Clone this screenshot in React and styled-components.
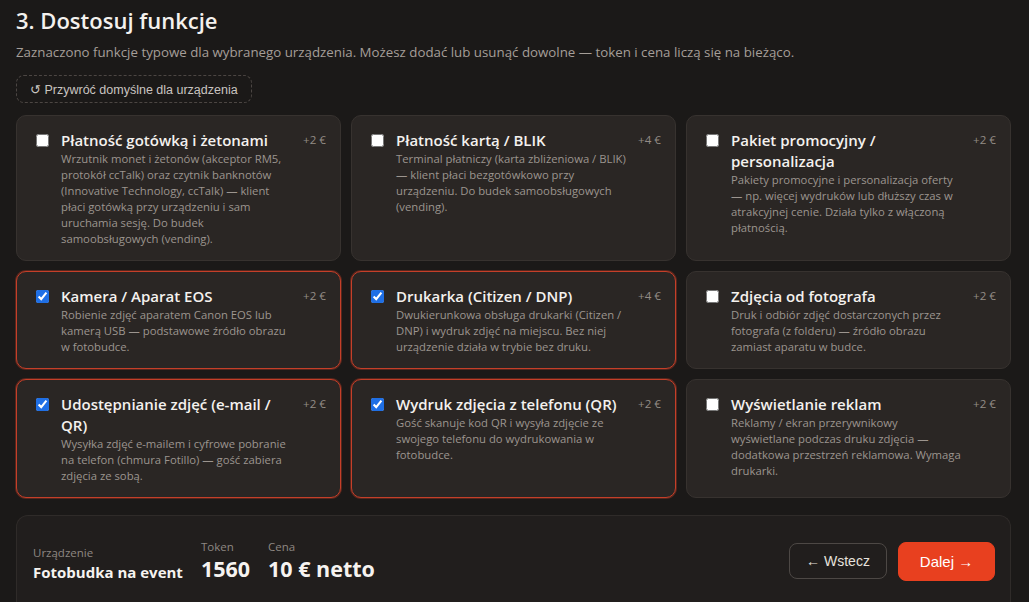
import styled, { createGlobalStyle } from "styled-components";

const GlobalStyle = createGlobalStyle`
  * { box-sizing: border-box; }
  body {
    margin: 0;
    background: #1b1918;
    color: #f1eeeb;
    font-family: "Open Sans", "Noto Sans", sans-serif;
  }
`;

const FEATURES = [
  {
    id: "cash",
    title: "Płatność gotówką i żetonami",
    desc: "Wrzutnik monet i żetonów (akceptor RM5, protokół ccTalk) oraz czytnik banknotów (Innovative Technology, ccTalk) — klient płaci gotówką przy urządzeniu i sam uruchamia sesję. Do budek samoobsługowych (vending).",
    price: 2,
    checked: false,
  },
  {
    id: "card",
    title: "Płatność kartą / BLIK",
    desc: "Terminal płatniczy (karta zbliżeniowa / BLIK) — klient płaci bezgotówkowo przy urządzeniu. Do budek samoobsługowych (vending).",
    price: 4,
    checked: false,
  },
  {
    id: "promo",
    title: "Pakiet promocyjny / personalizacja",
    desc: "Pakiety promocyjne i personalizacja oferty — np. więcej wydruków lub dłuższy czas w atrakcyjnej cenie. Działa tylko z włączoną płatnością.",
    price: 2,
    checked: false,
  },
  {
    id: "camera",
    title: "Kamera / Aparat EOS",
    desc: "Robienie zdjęć aparatem Canon EOS lub kamerą USB — podstawowe źródło obrazu w fotobudce.",
    price: 2,
    checked: true,
  },
  {
    id: "printer",
    title: "Drukarka (Citizen / DNP)",
    desc: "Dwukierunkowa obsługa drukarki (Citizen / DNP) i wydruk zdjęć na miejscu. Bez niej urządzenie działa w trybie bez druku.",
    price: 4,
    checked: true,
  },
  {
    id: "photographer",
    title: "Zdjęcia od fotografa",
    desc: "Druk i odbiór zdjęć dostarczonych przez fotografa (z folderu) — źródło obrazu zamiast aparatu w budce.",
    price: 2,
    checked: false,
  },
  {
    id: "share",
    title: "Udostępnianie zdjęć (e-mail / QR)",
    desc: "Wysyłka zdjęć e-mailem i cyfrowe pobranie na telefon (chmura Fotillo) — gość zabiera zdjęcia ze sobą.",
    price: 2,
    checked: true,
  },
  {
    id: "qrprint",
    title: "Wydruk zdjęcia z telefonu (QR)",
    desc: "Gość skanuje kod QR i wysyła zdjęcie ze swojego telefonu do wydrukowania w fotobudce.",
    price: 2,
    checked: true,
  },
  {
    id: "ads",
    title: "Wyświetlanie reklam",
    desc: "Reklamy / ekran przerywnikowy wyświetlane podczas druku zdjęcia — dodatkowa przestrzeń reklamowa. Wymaga drukarki.",
    price: 2,
    checked: false,
  },
];

const Page = styled.div`
  padding: 4px 18px 0 16px;
`;

const Heading = styled.h2`
  margin: 0;
  font-size: 22px;
  font-weight: 600;
  line-height: 32px;
  color: #f4f1ee;
`;

const Lead = styled.p`
  margin: 7px 0 0;
  font-size: 13.3px;
  line-height: 18px;
  color: #a59e98;
`;

const ResetButton = styled.button`
  margin-top: 14px;
  height: 28px;
  padding: 0 13px;
  border: 1px dashed #4c4643;
  border-radius: 8px;
  background: transparent;
  color: #c9c4c0;
  font-family: "Liberation Sans", Arial, sans-serif;
  font-size: 12.5px;
`;

const Grid = styled.div`
  margin-top: 12px;
  display: grid;
  grid-template-columns: repeat(3, 1fr);
  gap: 10px 10px;
`;

const Card = styled.label`
  display: grid;
  grid-template-columns: 13px 1fr auto;
  column-gap: 12px;
  align-items: start;
  padding: 14px 14px 13px 19px;
  border-radius: 10px;
  background: #2a2624;
  border: 1px solid ${(p) => (p.$active ? "#c53f29" : "#37322f")};
  box-shadow: ${(p) => (p.$active ? "0 0 0 1px rgba(197, 63, 41, 0.35)" : "none")};
`;

const Check = styled.input`
  margin: 4px 0 0;
  width: 13px;
  height: 13px;
  accent-color: #1f6fe5;
`;

const Body = styled.div`
  min-width: 0;
`;

const CardTitle = styled.div`
  font-size: 15px;
  font-weight: 600;
  line-height: 21px;
  color: #f4f1ee;
`;

const CardDesc = styled.div`
  font-size: 11.3px;
  line-height: 16px;
  color: #9c958f;
`;

const Price = styled.div`
  margin-left: -2px;
  padding-top: 2px;
  font-size: 11.6px;
  line-height: 16px;
  color: #938c86;
  white-space: nowrap;
`;

const Summary = styled.div`
  margin-top: 17px;
  display: flex;
  align-items: center;
  justify-content: space-between;
  padding: 23px 15px 30px 16px;
  border: 1px solid #2f2b29;
  border-bottom: none;
  border-radius: 12px 12px 0 0;
  background: #211e1d;
`;

const Stats = styled.div`
  display: flex;
  align-items: flex-end;
  gap: 18px;
`;

const Stat = styled.div`
  display: flex;
  flex-direction: column;
`;

const StatLabel = styled.span`
  font-size: 11.5px;
  line-height: 16px;
  color: #8e8782;
`;

const StatValue = styled.span`
  font-weight: 700;
  color: #f6f3f0;
  font-size: ${(p) => (p.$big ? "21.5px" : "15px")};
  line-height: ${(p) => (p.$big ? "28px" : "22px")};
`;

const Actions = styled.div`
  display: flex;
  align-items: center;
  gap: 11px;
`;

const Button = styled.button`
  font-family: "Liberation Sans", Arial, sans-serif;
  border-radius: 8px;
  cursor: pointer;
  height: ${(p) => (p.$primary ? "39px" : "36px")};
  width: ${(p) => (p.$primary ? "97px" : "98px")};
  font-size: ${(p) => (p.$primary ? "15px" : "14px")};
  color: ${(p) => (p.$primary ? "#fff" : "#e6e2de")};
  background: ${(p) => (p.$primary ? "#e8401f" : "transparent")};
  border: 1px solid ${(p) => (p.$primary ? "#e8401f" : "#4d4845")};
`;

const FeatureCard = ({ feature }) => (
  <Card $active={feature.checked}>
    <Check type="checkbox" defaultChecked={feature.checked} />
    <Body>
      <CardTitle>{feature.title}</CardTitle>
      <CardDesc>{feature.desc}</CardDesc>
    </Body>
    <Price>+{feature.price} €</Price>
  </Card>
);

export default function App() {
  return (
    <>
      <GlobalStyle />
      <Page>
        <Heading>3. Dostosuj funkcje</Heading>
        <Lead>
          Zaznaczono funkcje typowe dla wybranego urządzenia. Możesz dodać lub usunąć dowolne — token i cena liczą się na bieżąco.
        </Lead>
        <ResetButton type="button">↺ Przywróć domyślne dla urządzenia</ResetButton>
        <Grid>
          {FEATURES.map((f) => (
            <FeatureCard key={f.id} feature={f} />
          ))}
        </Grid>
        <Summary>
          <Stats>
            <Stat>
              <StatLabel>Urządzenie</StatLabel>
              <StatValue>Fotobudka na event</StatValue>
            </Stat>
            <Stat>
              <StatLabel>Token</StatLabel>
              <StatValue $big>1560</StatValue>
            </Stat>
            <Stat>
              <StatLabel>Cena</StatLabel>
              <StatValue $big>10 € netto</StatValue>
            </Stat>
          </Stats>
          <Actions>
            <Button type="button">← Wstecz</Button>
            <Button type="button" $primary>Dalej →</Button>
          </Actions>
        </Summary>
      </Page>
    </>
  );
}
